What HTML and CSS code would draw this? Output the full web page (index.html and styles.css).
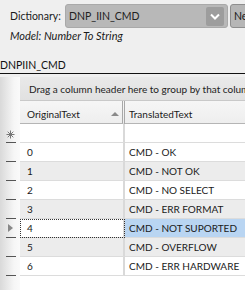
FILE: index.html
```html
<!DOCTYPE html>
<html>
<head>
<meta charset="utf-8">
<link rel="stylesheet" href="styles.css">
</head>
<body>
<div class="top">
  <div class="dict-row">
    <span class="label">Dictionary:</span>
    <div class="combo">
      <span class="combo-text">DNP_IIN_CMD</span>
      <span class="drop"><svg width="10" height="7" viewBox="0 0 10 7"><path d="M1 1.5 L5 5.5 L9 1.5" fill="none" stroke="#fff" stroke-width="2"/></svg></span>
    </div>
    <div class="btn">New</div>
  </div>
  <div class="model">Model: Number To String</div>
</div>
<div class="title">DNPIIN_CMD</div>
<div class="grid">
  <div class="ind ind-top"></div>
  <div class="group-panel">Drag a column header here to group by that column</div>
  <div class="ind ind-top"></div>
  <div class="hdr hdr1"><span>OriginalText</span><span class="sort"></span></div>
  <div class="hdr hdr2">TranslatedText</div>
  <div class="ind ind-new"><svg class="star" width="9" height="9" viewBox="0 0 9 9"><path d="M4.5 0.5V8.5M0.5 4.5H8.5M1.7 1.7L7.3 7.3M7.3 1.7L1.7 7.3" stroke="#777" stroke-width="1" fill="none"/></svg></div>
  <div class="cell c1 white"></div><div class="cell c2 white"></div>
  <div class="ind"></div><div class="cell c1 white">0</div><div class="cell c2 white">CMD - OK</div>
  <div class="ind"></div><div class="cell c1 alt">1</div><div class="cell c2 alt">CMD - NOT OK</div>
  <div class="ind"></div><div class="cell c1 white">2</div><div class="cell c2 white">CMD - NO SELECT</div>
  <div class="ind"></div><div class="cell c1 alt">3</div><div class="cell c2 alt">CMD - ERR FORMAT</div>
  <div class="ind cur"><span class="arrow"></span></div><div class="cell c1 white focus">4</div><div class="cell c2 sel">CMD - NOT SUPORTED</div>
  <div class="ind"></div><div class="cell c1 alt">5</div><div class="cell c2 alt">CMD - OVERFLOW</div>
  <div class="ind"></div><div class="cell c1 white">6</div><div class="cell c2 white">CMD - ERR HARDWARE</div>
  <div class="ind ind-rest"></div><div class="rest"></div>
</div>
</body>
</html>
```
FILE: styles.css
```css
html, body { margin: 0; padding: 0; }
body {
  width: 245px; height: 290px; overflow: hidden;
  background: #efefef;
  font-family: Lato, "Noto Sans", sans-serif;
  font-size: 10px;
  color: #1a1a1a;
}
.top { padding: 4px 0 0 10px; height: 58px; box-sizing: border-box; font-size: 10.5px; }
.dict-row { display: flex; align-items: center; height: 24px; white-space: nowrap; }
.label { width: 55px; flex: none; }
.combo {
  flex: none; width: 163px; height: 24px; box-sizing: border-box;
  background: #b8b8b8; border: 1px solid #a9a9a9; border-radius: 3px;
  display: flex; align-items: center; justify-content: space-between;
  padding: 0 3px 0 3px;
}
.combo-text { color: #222; }
.drop {
  width: 18px; height: 19px; background: #9d9d9d; border-radius: 2px;
  display: flex; align-items: center; justify-content: center;
}
.btn {
  flex: none; margin-left: 2px; width: 40px; height: 24px; box-sizing: border-box;
  background: #b6b6b6; border: 1px solid #8e8e8e; border-radius: 3px;
  padding: 5px 0 0 3px; overflow: hidden;
}
.model { font-style: italic; margin-top: 1px; font-size: 11px; }
.title {
  height: 15px; line-height: 15px; font-size: 10.5px; color: #111;
  border-bottom: 1px solid #111;
}
.grid {
  margin-top: 3px;
  display: grid;
  grid-template-columns: 20px 105px 130px;
  grid-template-rows: 24px 23px 19px repeat(7, 19px) 1fr;
  height: 213px;
  background: #fff;
  white-space: nowrap;
}
.ind {
  background: linear-gradient(to right, #d9d9d9, #f6f6f6 70%, #fafafa);
  position: relative;
}
.ind::after {
  content: ""; position: absolute; left: 6px; width: 10px; bottom: 0; height: 1px; background: #555;
}
.ind-top::after, .ind-rest::after { display: none; }
.group-panel {
  grid-column: 2 / 4;
  background: linear-gradient(#e9e9e9, #e1e1e1);
  border-bottom: 1px solid #c9c9c9;
  padding: 6px 0 0 9px; box-sizing: border-box;
  overflow: hidden; color: #222;
}
.hdr {
  background: linear-gradient(#f6f6f6, #eeeeee);
  border-bottom: 1px solid #b5b5b5;
  box-sizing: border-box; padding: 7px 0 0 7px;
  overflow: hidden;
}
.hdr1 { display: flex; justify-content: space-between; border-right: 3px double #a8a8a8; padding-right: 3px; }
.hdr2 { padding-left: 4px; }
.sort {
  width: 0; height: 0; margin-top: 4px;
  border-left: 4px solid transparent; border-right: 4px solid transparent;
  border-bottom: 4px solid #8a8a8a;
}
.star { position: absolute; left: 6px; top: 6px; }
.cell {
  box-sizing: border-box; padding: 3px 0 0 7px; overflow: hidden;
  border-bottom: 1px solid #dcdcdc;
}
.c1 { border-right: 2px solid #d9d9d9; }
.c2 { padding-left: 4px; }
.white { background: #fff; }
.alt { background: #ececec; }
.sel { background: #b9d5f2; }
.focus { outline: 1px dotted #333; outline-offset: -1px; }
.arrow {
  position: absolute; left: 8px; top: 5px; width: 0; height: 0;
  border-top: 4px solid transparent; border-bottom: 4px solid transparent;
  border-left: 5px solid #888;
}
.rest { grid-column: 2 / 4; background: #fff; }
```
